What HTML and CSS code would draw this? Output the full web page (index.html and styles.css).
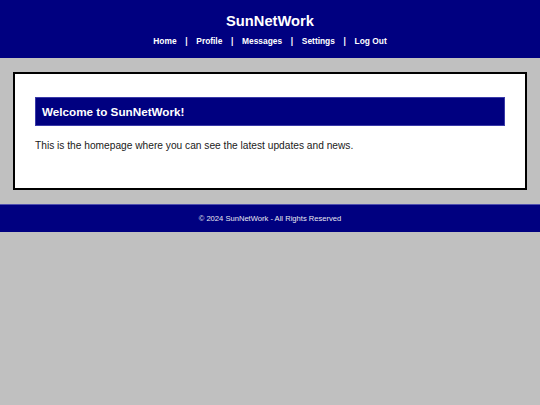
FILE: index.html
```html
<!DOCTYPE html>
<html>
<head>
<meta charset="utf-8">
<link rel="stylesheet" href="styles.css">
</head>
<body>
<header class="site-header">
  <h1 class="site-title">SunNetWork</h1>
  <nav class="nav">
    <a href="#">Home</a><span class="sep">|</span>
    <a href="#">Profile</a><span class="sep">|</span>
    <a href="#">Messages</a><span class="sep">|</span>
    <a href="#">Settings</a><span class="sep">|</span>
    <a href="#">Log Out</a>
  </nav>
</header>
<main class="box">
  <h2 class="welcome">Welcome to SunNetWork!</h2>
  <p class="intro">This is the homepage where you can see the latest updates and news.</p>
</main>
<footer class="site-footer">© 2024 SunNetWork - All Rights Reserved</footer>
</body>
</html>
```
FILE: styles.css
```css
html, body {
  margin: 0;
  padding: 0;
  background: #c0c0c0;
  font-family: "Liberation Sans", Arial, sans-serif;
}
.site-header {
  background: #000080;
  height: 58px;
  box-sizing: border-box;
  padding-top: 12px;
  text-align: center;
}
.site-title {
  margin: 0;
  font-size: 14.7px;
  line-height: 18px;
  font-weight: bold;
  color: #ffffff;
}
.nav {
  display: flex;
  justify-content: center;
  gap: 8.7px;
  margin-top: 6px;
  font-size: 8.4px;
  line-height: 10px;
  font-weight: bold;
}
.nav a {
  color: #ffffff;
  text-decoration: none;
}
.sep {
  color: #ffffff;
}
.box {
  display: block;
  margin: 14px 13px 0 13px;
  height: 118px;
  box-sizing: border-box;
  border: 2px solid #000000;
  background: #ffffff;
  padding: 23px 20px 0 20px;
}
.welcome {
  margin: 0;
  height: 29px;
  box-sizing: border-box;
  background: #000080;
  border: 1px solid #3a3aa8;
  color: #ffffff;
  font-size: 11.7px;
  line-height: 27px;
  padding-left: 6px;
  font-weight: bold;
}
.intro {
  margin: 13px 0 0 0;
  font-size: 10.2px;
  line-height: 13px;
  color: #1a1a1a;
}
.site-footer {
  margin-top: 14px;
  height: 28px;
  box-sizing: border-box;
  background: #000080;
  border-top: 1px solid #5050b0;
  color: #e8e8f0;
  font-size: 7.6px;
  line-height: 27px;
  text-align: center;
}
```
